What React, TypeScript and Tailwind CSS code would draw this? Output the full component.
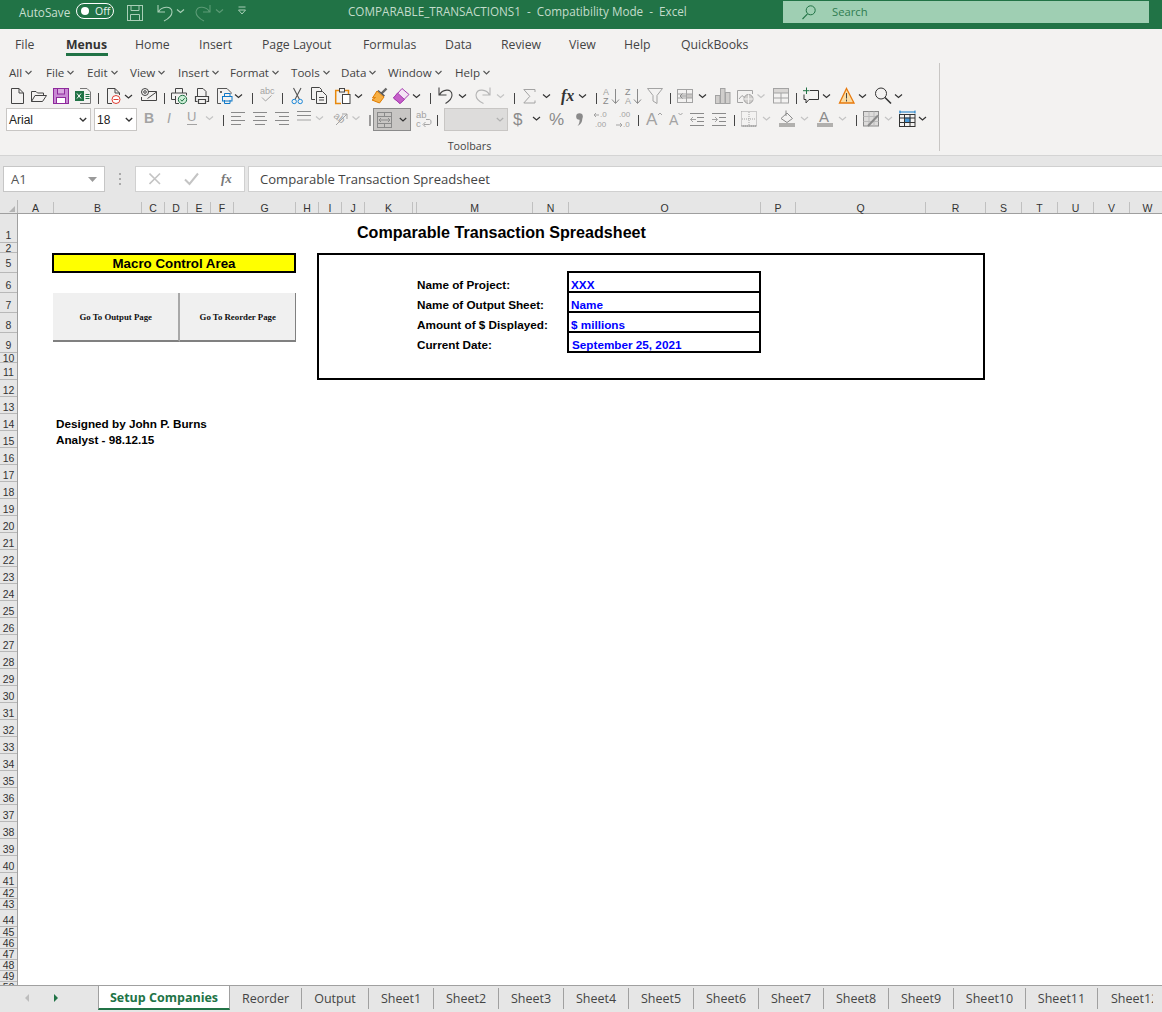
import React from "react";

const D = "#444";
const G = "#a3a3a3";
const M = "#8a8a8a";

function Ico({ x, to, y, h = 24, children }: { x: number; to: number; y: number; h?: number; children?: React.ReactNode }) {
  const w = to - x;
  return (
    <svg width={w} height={h} viewBox={`${x} ${y} ${w} ${h}`} fill="none" className="shrink-0 overflow-visible">
      {children}
    </svg>
  );
}
const P = ({ d, c = D, w = 1, f = "none" }: { d: string; c?: string; w?: number; f?: string }) => (
  <path d={d} stroke={c} strokeWidth={w} fill={f} />
);
const Chev = ({ x, y, c = "#333" }: { x: number; y: number; c?: string }) => (
  <path d={`M${x - 3.5} ${y - 1.5}L${x} ${y + 1.5}L${x + 3.5} ${y - 1.5}`} stroke={c} strokeWidth={1.2} fill="none" />
);
const Sep = ({ x, y }: { x: number; y: number }) => <path d={`M${x} ${y}V${y + 11}`} stroke="#444" strokeWidth={1} />;
const T = ({ x, y, s, c = G, b, i, fam = "Liberation Sans", children }: { x: number; y: number; s: number; c?: string; b?: boolean; i?: boolean; fam?: string; children: React.ReactNode }) => (
  <text x={x} y={y} fontSize={s} fill={c} fontFamily={fam} fontWeight={b ? 700 : 400} fontStyle={i ? "italic" : "normal"}>
    {children}
  </text>
);

function ToolbarRow1() {
  const y = 85;
  return (
    <div className="flex h-[23px] pl-[11px] shrink-0">
      <Ico x={11} to={31} y={y}><P d="M11.5 88.5H19L23.5 93V103.5H11.5Z M19 88.5V93H23.5" /></Ico>
      <Ico x={31} to={53} y={y}><P d="M31.5 101.5V91.5H36L37.5 93H43.5V95.5 M31.5 101.5H42.5L46.5 95.5H35L31.5 101.5" /></Ico>
      <Ico x={53} to={75} y={y}>
        <rect x={53.5} y={88.5} width={15} height={15} fill="#c98ad4" stroke="#8e2a9c" />
        <rect x={57.5} y={88.5} width={7} height={5.5} fill="#d9a8e0" stroke="#8e2a9c" />
        <rect x={56.5} y={97.5} width={9} height={6} fill="#fff" stroke="#8e2a9c" />
      </Ico>
      <Ico x={75} to={98} y={y}>
        <P d="M80 88.5H87L90.5 92V103.5H80" c="#777" />
        <rect x={75} y={91} width={9} height={10} fill="#217346" />
        <P d="M77 93.5l4 5M81 93.5l-4 5" c="#fff" />
        <P d="M85.5 94.5h4M85.5 96.5h4M85.5 98.5h4" c="#217346" />
      </Ico>
      <Ico x={98} to={107} y={y}><Sep x={98.5} y={93} /></Ico>
      <Ico x={107} to={141} y={y}>
        <P d="M107.5 103.5V88.5H115L119.5 93V95 M115 88.5V93H119.5 M107.5 103.5H112" />
        <circle cx={116} cy={99.5} r={4} fill="#fff" stroke="#e03c31" />
        <P d="M113.5 99.5h5" c="#e03c31" />
        <Chev x={128.5} y={96.5} />
      </Ico>
      <Ico x={141} to={164} y={y}>
        <P d="M148 91.5H156.5V100.5H141.5V97" />
        <P d="M147.5 98.5L156.5 92" />
        <circle cx={145} cy={92} r={3.5} stroke={D} />
        <circle cx={145} cy={92} r={1.3} stroke={D} />
      </Ico>
      <Ico x={164} to={171} y={y}><Sep x={164.5} y={93} /></Ico>
      <Ico x={171} to={195} y={y}>
        <P d="M175.5 93V88.5H182.5V93 M175 99.5H171.5V93H186.5V95.5 M175.5 96V103.5H179" />
        <circle cx={182.5} cy={99.5} r={4.2} fill="#cdeed6" stroke="#217346" />
        <P d="M180.5 99.5l1.5 1.7l2.7-3" c="#217346" />
      </Ico>
      <Ico x={195} to={217} y={y}>
        <P d="M197.5 96V88.5H203L206 91.5V96" />
        <P d="M197.5 101.5H195.5V96.5H208.5V101.5H206.5" w={1.2} />
        <P d="M198.5 99.5H205.5V103.5H198.5Z" w={1.2} />
      </Ico>
      <Ico x={217} to={252} y={y}>
        <P d="M217.5 103.5V88.5H227L231 92.5V94" c="#555" />
        <P d="M217.5 103.5H221" c="#555" />
        <rect x={220} y={91} width={2} height={2} fill="#666" />
        <rect x={222.5} y={96.5} width={9.5} height={4.5} stroke="#0e78c8" />
        <P d="M224.5 96V93.5H230V96 M224.5 100V103.5H230V100" c="#0e78c8" />
        <Chev x={238.5} y={96} />
      </Ico>
      <Ico x={252} to={260} y={y}><Sep x={252.5} y={93} /></Ico>
      <Ico x={260} to={282} y={y}>
        <T x={260} y={94} s={9}>abc</T>
        <P d="M262 97.5l3.5 3.5l6-5.5" c={G} />
      </Ico>
      <Ico x={282} to={291} y={y}><Sep x={282.5} y={93} /></Ico>
      <Ico x={291} to={311} y={y}>
        <P d="M293.5 88L299.5 99.5M301 88L295 99.5" c="#555" w={1.1} />
        <circle cx={294.2} cy={101.5} r={2.2} stroke="#1b87d8" />
        <circle cx={300.2} cy={101.5} r={2.2} stroke="#1b87d8" />
      </Ico>
      <Ico x={311} to={335} y={y}>
        <P d="M315 99.5H311.5V87.5H319.5L321.5 89.5V91" />
        <P d="M316.5 91.5H322.5L326.5 95.5V103.5H316.5Z" f="#f3f2f1" />
        <P d="M319 97.5h5M319 100h5" />
      </Ico>
      <Ico x={335} to={371} y={y}>
        <P d="M339 90.5H335.7V103.5H341" c="#e8890c" w={1.5} />
        <P d="M345 90.5H348.5V94" c="#e8890c" w={1.5} />
        <rect x={339.5} y={88.5} width={5} height={3.5} stroke={D} />
        <rect x={342.5} y={94.5} width={7.5} height={9} fill="#fff" stroke={D} />
        <Chev x={358.5} y={96} />
      </Ico>
      <Ico x={371} to={393} y={y}>
        <P d="M381.5 93.5L386.5 88.5" c="#666" w={2.4} />
        <path d="M377 91L384 97L379.5 103L372 100L375.5 97.5L372.5 98Z" fill="#f7b044" stroke="#e07b00" />
        <P d="M378 90.5L384.5 96" c="#555" w={1.4} />
      </Ico>
      <Ico x={393} to={430} y={y}>
        <path d="M402 88.5L409 94.5L400 103.5L393.5 98Z" fill="#f4e3f5" stroke="#a63bb0" />
        <path d="M397.5 93L404.5 99.5L400 103.5L393.5 98Z" fill="#c65fc9" stroke="#a63bb0" />
        <Chev x={416.5} y={96} />
      </Ico>
      <Ico x={430} to={438} y={y}><Sep x={430.5} y={93} /></Ico>
      <Ico x={438} to={475} y={y}>
        <P d="M439 87.5V95H446.5 M439.5 95C442 89.5 452 87.5 452 95C452 99 448 102 445.5 103.5" w={1.1} />
        <Chev x={462.5} y={96} />
      </Ico>
      <Ico x={475} to={514} y={y}>
        <P d="M490 87.5V95H482.5 M489.5 95C487 89.5 477 87.5 476 95C476 99 480 102 483.5 103.5" c="#b5b5b5" w={1.1} />
        <Chev x={500.5} y={96} c="#c4c4c4" />
      </Ico>
      <Ico x={514} to={523} y={y}><Sep x={514.5} y={93} /></Ico>
      <Ico x={523} to={561} y={y}>
        <P d="M535 92V89.5H523.8L529.8 96.3L523.8 103H535V100.5" c={G} />
        <Chev x={546.5} y={96} />
      </Ico>
      <Ico x={561} to={596} y={y}>
        <T x={561} y={101} s={16} c="#333" b i fam="Liberation Serif">fx</T>
        <Chev x={582.5} y={96} />
      </Ico>
      <Ico x={596} to={603} y={y}><Sep x={596.5} y={93} /></Ico>
      <Ico x={603} to={625} y={y}>
        <T x={603} y={94.5} s={9}>A</T>
        <T x={603} y={103.5} s={9} c="#888">Z</T>
        <P d="M615.5 89V103M612 99.5l3.5 4l3.5-4" c={M} />
      </Ico>
      <Ico x={625} to={647} y={y}>
        <T x={625} y={94.5} s={9} c="#888">Z</T>
        <T x={625} y={103.5} s={9}>A</T>
        <P d="M637.5 89V103M634 99.5l3.5 4l3.5-4" c={M} />
      </Ico>
      <Ico x={647} to={670} y={y}><P d="M647.5 88.5H662.5L657 95.5V103.5L653 101V95.5Z" c={G} /></Ico>
      <Ico x={670} to={677} y={y}><Sep x={670.5} y={93} /></Ico>
      <Ico x={677} to={715} y={y}>
        <rect x={677.5} y={89.5} width={15} height={13} stroke={G} />
        <rect x={687} y={94} width={5} height={4} fill="#c8c6c4" />
        <P d="M686.5 89.5V102.5M677.5 94H692.5M677.5 98H692.5" c={G} />
        <P d="M686 96H680M682.5 93.5L680 96L682.5 98.5" c={M} />
        <Chev x={702.5} y={96} />
      </Ico>
      <Ico x={715} to={737} y={y}>
        <rect x={715.5} y={95.5} width={4.5} height={8} fill="#d0cecc" stroke={G} />
        <rect x={720.5} y={88.5} width={4.5} height={15} fill="#d0cecc" stroke={G} />
        <rect x={725.5} y={92.5} width={4.5} height={11} fill="#d0cecc" stroke={G} />
      </Ico>
      <Ico x={737} to={773} y={y}>
        <P d="M737.5 90.5H752.5V94 M737.5 90.5V102.5H743" c={G} />
        <P d="M739 99L742 95.5L745 98" c={G} />
        <circle cx={748.5} cy={99} r={4.5} fill="#d0cecc" stroke={G} />
        <P d="M744 99h9M748.5 94.5v9" c="#f3f2f1" />
        <Chev x={761} y={96} c="#c4c4c4" />
      </Ico>
      <Ico x={773} to={796} y={y}>
        <rect x={773.5} y={88.5} width={15} height={14.5} fill="#f3f2f1" stroke={G} />
        <rect x={774} y={89} width={14} height={4} fill="#d8d6d4" />
        <P d="M773.5 93H788.5M773.5 98H788.5M781 93V103" c={G} />
      </Ico>
      <Ico x={796} to={803} y={y}><Sep x={796.5} y={93} /></Ico>
      <Ico x={803} to={839} y={y}>
        <P d="M810 90.5H818.5V99.5H809L806 103V99.5H804V94.5" c="#333" />
        <P d="M806.5 87.5V94M803 90.7H809.5" c="#217346" />
        <Chev x={826.5} y={96} />
      </Ico>
      <Ico x={839} to={875} y={y}>
        <path d="M846.5 88.5L854 103H839.5Z" fill="#fbdca3" stroke="#e8790c" strokeWidth={1.3} />
        <P d="M846.5 93V98.5M846.5 99.5V101.5" c="#444" />
        <Chev x={862.5} y={96} />
      </Ico>
      <Ico x={875} to={912} y={y}>
        <circle cx={881} cy={93.5} r={5.5} stroke="#333" />
        <P d="M885 97.5L891 103.5" c="#333" w={1.6} />
        <Chev x={898.5} y={96} />
      </Ico>
    </div>
  );
}

function Lines({ ls, y0, gap }: { ls: [number, number][]; y0: number; gap: number }) {
  return (
    <>
      {ls.map((l, i) => (
        <path key={i} d={`M${l[0]} ${y0 + i * gap}H${l[1]}`} stroke={M} strokeWidth={1} />
      ))}
    </>
  );
}

function SelectBox({ label, cls }: { label: string; cls: string }) {
  return (
    <div className={`${cls} h-[23px] bg-white border border-[#c8c6c4] flex items-center justify-between pl-[2px] pr-[3px] text-[12px] text-[#222] font-['Liberation_Sans',sans-serif]`}>
      <span>{label}</span>
      <svg width={8} height={5} viewBox="0 0 8 5" fill="none"><path d="M0.8 1L4 4L7.2 1" stroke="#333" strokeWidth={1.3} /></svg>
    </div>
  );
}

function ToolbarRow2() {
  const y = 108;
  return (
    <div className="flex h-[24px] pl-[6px] shrink-0">
      <SelectBox label="Arial" cls="w-[85px]" />
      <div className="w-[3px]" />
      <SelectBox label="18" cls="w-[43px]" />
      <Ico x={137} to={223} y={y}>
        <T x={144} y={123} s={14} b>B</T>
        <T x={167} y={123} s={14} i>I</T>
        <T x={187} y={121} s={13}>U</T>
        <P d="M187 124.5H197" c={G} />
        <Chev x={209.5} y={118} c="#c4c4c4" />
      </Ico>
      <Ico x={223} to={231} y={y}><Sep x={223.5} y={115} /></Ico>
      <Ico x={231} to={253} y={y}><Lines ls={[[231, 245], [231, 241], [231, 245], [231, 241]]} y0={112.5} gap={4} /></Ico>
      <Ico x={253} to={275} y={y}><Lines ls={[[253, 267], [255, 265], [253, 267], [255, 265]]} y0={112.5} gap={4} /></Ico>
      <Ico x={275} to={297} y={y}><Lines ls={[[275, 289], [279, 289], [275, 289], [279, 289]]} y0={112.5} gap={4} /></Ico>
      <Ico x={297} to={332} y={y}>
        <Lines ls={[[297, 311], [297, 311]]} y0={111.5} gap={4} />
        <path d="M297 120H311" stroke={G} />
        <Chev x={319.5} y={118} c="#c4c4c4" />
      </Ico>
      <Ico x={332} to={370} y={y}>
        <text x={333} y={117} fontSize={10} fill={G} fontFamily="Liberation Sans" transform="rotate(38 333 117)">ab</text>
        <P d="M336 125L347 114M342 114H347V119" c={G} />
        <Chev x={356} y={118} c="#c4c4c4" />
      </Ico>
      <Ico x={370} to={373} y={y}><Sep x={370} y={115} /></Ico>
      <div className="w-[38px] h-[23px] bg-[#c8c6c4] border border-[#8a8a8a] flex items-center pl-[3px] gap-[7px]">
        <svg width={15} height={16} viewBox="0 0 15 16" fill="none">
          <rect x={0.5} y={0.5} width={14} height={15} stroke="#8a8a8a" />
          <path d="M0.5 4.5H14.5M0.5 11.5H14.5M7.5 0.5V4.5M7.5 11.5V15.5M2 8H13M4 6L2 8L4 10M11 6L13 8L11 10" stroke="#8a8a8a" />
        </svg>
        <svg width={8} height={5} viewBox="0 0 8 5" fill="none"><path d="M0.8 1L4 4L7.2 1" stroke="#333" strokeWidth={1.2} /></svg>
      </div>
      <Ico x={411} to={437} y={y}>
        <T x={416} y={118} s={9.5}>ab</T>
        <T x={416} y={127} s={9.5}>c</T>
        <P d="M424 124.5H429.5C431.5 124.5 431.5 119.5 429.5 119.5H426M425.5 122L423 124.5L425.5 127" c={G} />
      </Ico>
      <Ico x={437} to={444} y={y}><Sep x={437.5} y={115} /></Ico>
      <div className="w-[64px] h-[23px] bg-[#dddcdb] border border-[#c8c6c4] flex items-center justify-end pr-[3px]">
        <svg width={8} height={5} viewBox="0 0 8 5" fill="none"><path d="M0.8 1L4 4L7.2 1" stroke="#b0b0b0" strokeWidth={1.2} /></svg>
      </div>
      <Ico x={508} to={549} y={y}>
        <T x={513} y={125} s={17} c={M}>$</T>
        <Chev x={536.5} y={118.5} />
      </Ico>
      <Ico x={549} to={576} y={y}><T x={549} y={125} s={17} c={M}>%</T></Ico>
      <Ico x={576} to={593} y={y}>
        <circle cx={579.5} cy={116.5} r={3.3} fill={M} />
        <path d="M582 117C583 121 581 124.5 577.5 126C579.5 123.5 579.8 121 579.5 119Z" fill={M} />
      </Ico>
      <Ico x={593} to={615} y={y}>
        <T x={600} y={117} s={8}>.0</T>
        <T x={595} y={127} s={8}>.00</T>
        <P d="M599 115H594M596 113L594 115L596 117" c={G} />
      </Ico>
      <Ico x={615} to={638} y={y}>
        <T x={619} y={117} s={8}>.00</T>
        <T x={623} y={127} s={8}>.0</T>
        <P d="M616 125H622M620 123L622 125L620 127" c={G} />
      </Ico>
      <Ico x={638} to={646} y={y}><Sep x={638.5} y={115} /></Ico>
      <Ico x={646} to={669} y={y}>
        <T x={646} y={125} s={17}>A</T>
        <P d="M658 115l2-2l2 2" c={G} />
      </Ico>
      <Ico x={669} to={690} y={y}>
        <T x={669} y={125} s={14}>A</T>
        <P d="M678.5 113l2 2l2-2" c={G} />
      </Ico>
      <Ico x={690} to={712} y={y}>
        <Lines ls={[[690, 704], [697, 704], [697, 704], [690, 704]]} y0={113.5} gap={4} />
        <P d="M696 119.5H690.5M693 117L690.5 119.5L693 122" c={G} />
      </Ico>
      <Ico x={712} to={734} y={y}>
        <Lines ls={[[712, 726], [719, 726], [719, 726], [712, 726]]} y0={113.5} gap={4} />
        <P d="M712 119.5H717.5M715 117L717.5 119.5L715 122" c={G} />
      </Ico>
      <Ico x={734} to={741} y={y}><Sep x={734.5} y={115} /></Ico>
      <Ico x={741} to={779} y={y}>
        <rect x={741.5} y={111.5} width={15} height={14.5} stroke={G} strokeDasharray="1 1" />
        <path d="M749 112V126M742 119H756" stroke={G} strokeDasharray="1 1" />
        <P d="M741.5 126H756.5" c={M} />
        <Chev x={766.5} y={118.5} c="#c4c4c4" />
      </Ico>
      <Ico x={779} to={817} y={y}>
        <P d="M781 118.5L787 113L792.5 118.5L787 122.5Z" c={M} />
        <P d="M786 110.5V116" c={M} />
        <rect x={779} y={123} width={16} height={4} fill="#b1b0ae" />
        <Chev x={804.5} y={118.5} c="#c4c4c4" />
      </Ico>
      <Ico x={817} to={856} y={y}>
        <T x={819} y={122} s={15} c={M}>A</T>
        <rect x={817} y={123} width={16} height={4} fill="#b1b0ae" />
        <Chev x={842.5} y={118.5} c="#c4c4c4" />
      </Ico>
      <Ico x={856} to={863} y={y}><Sep x={856.5} y={115} /></Ico>
      <Ico x={863} to={899} y={y}>
        <rect x={863.5} y={111.5} width={15} height={14.5} fill="#dddcdb" stroke={M} />
        <P d="M863.5 116.5H878.5M863.5 121.5H878.5M869 111.5V126M874 111.5V126" c="#bbb" />
        <P d="M868 126L878 115.5" c={M} w={2} />
        <Chev x={888.5} y={118.5} c="#c4c4c4" />
      </Ico>
      <Ico x={899} to={930} y={y}>
        <P d="M899.5 112H915M900 110.5V113.5M915 110.5V113.5" c="#0e78c8" />
        <rect x={904} y={117.5} width={6.5} height={5} fill="#4a9ad9" />
        <rect x={899.5} y={114.5} width={15.5} height={12} stroke="#333" />
        <P d="M899.5 118H915M899.5 122.5H915M904.5 114.5V126.5M910 114.5V126.5" c="#333" />
        <Chev x={922.5} y={118.5} />
      </Ico>
    </div>
  );
}

const tabs: [string, string][] = [
  ["File", "w-[51px]"],
  ["Menus", "w-[69px]"],
  ["Home", "w-[64px]"],
  ["Insert", "w-[63px]"],
  ["Page Layout", "w-[101px]"],
  ["Formulas", "w-[82px]"],
  ["Data", "w-[56px]"],
  ["Review", "w-[68px]"],
  ["View", "w-[55px]"],
  ["Help", "w-[57px]"],
  ["QuickBooks", "w-[90px]"],
];
const menus: [string, string][] = [
  ["All", "w-[37px]"],
  ["File", "w-[41px]"],
  ["Edit", "w-[43px]"],
  ["View", "w-[48px]"],
  ["Insert", "w-[52px]"],
  ["Format", "w-[61px]"],
  ["Tools", "w-[50px]"],
  ["Data", "w-[47px]"],
  ["Window", "w-[67px]"],
  ["Help", "w-[50px]"],
];

const columns: [string, string][] = [
  ["A", "w-[36px]"], ["B", "w-[88px]"], ["C", "w-[23px]"], ["D", "w-[23px]"], ["E", "w-[23px]"], ["F", "w-[23px]"],
  ["G", "w-[62px]"], ["H", "w-[23px]"], ["I", "w-[23px]"], ["J", "w-[23px]"], ["K", "w-[48px]"], ["", "w-[4px]"],
  ["M", "w-[116px]"], ["N", "w-[36px]"], ["O", "w-[192px]"], ["P", "w-[35px]"], ["Q", "w-[130px]"], ["R", "w-[60px]"],
  ["S", "w-[36px]"], ["T", "w-[36px]"], ["U", "w-[36px]"], ["V", "w-[36px]"], ["W", "w-[36px]"],
];

const rows: [string, string][] = [
  ["1", "h-[29px] items-end pb-[1px]"],
  ["2", "h-[10px] items-center"],
  ["5", "h-[20px] items-end pb-[3px]"],
  ["6", "h-[20px] items-end pb-[1px]"],
  ["7", "h-[20px] items-end pb-[1px]"],
  ["8", "h-[20px] items-end pb-[1px]"],
  ["9", "h-[20px] items-end pb-[1px]"],
  ["10", "h-[10px] items-center"],
  ["11", "h-[17px] items-end pb-[1px]"],
];
for (let n = 12; n <= 40; n++) rows.push([String(n), "h-[17px] items-end"]);
rows.push(
  ["41", "h-[15px] items-end"],
  ["42", "h-[11px] items-center"],
  ["43", "h-[11px] items-center"],
  ["44", "h-[17px] items-end"],
);
for (let n = 45; n <= 49; n++) rows.push([String(n), "h-[11px] items-center"]);
rows.push(["50", "h-[11px] items-center"]);

const sheetTabs: [string, string][] = [
  ["Reorder", "w-[72px]"], ["Output", "w-[67px]"], ["Sheet1", "w-[65px]"], ["Sheet2", "w-[65px]"], ["Sheet3", "w-[65px]"],
  ["Sheet4", "w-[65px]"], ["Sheet5", "w-[65px]"], ["Sheet6", "w-[65px]"], ["Sheet7", "w-[65px]"], ["Sheet8", "w-[65px]"],
  ["Sheet9", "w-[65px]"], ["Sheet10", "w-[72px]"], ["Sheet11", "w-[72px]"],
];

const params: [string, string, string, string][] = [
  ["Name of Project:", "XXX", "row-[4]", "border-t-2 -mt-[2px] pl-[2px]"],
  ["Name of Output Sheet:", "Name", "row-[5]", "pl-[2px]"],
  ["Amount of $ Displayed:", "$ millions", "row-[6]", "pl-[2px]"],
  ["Current Date:", "September 25, 2021", "row-[7]", "pl-[3px]"],
];

export default function App() {
  return (
    <div className="w-[1162px] h-[1012px] overflow-hidden flex flex-col bg-white font-['Open_Sans',sans-serif]">
      {/* title bar */}
      <div className="h-[29px] bg-[#217346] flex items-start shrink-0">
        <span className="ml-[19px] mt-[3px] text-[11.75px] leading-[18px] w-[57px] text-[#c7dfcf]">AutoSave</span>
        <div className="mt-[3px] w-[38px] h-[16px] rounded-full border border-white flex items-center pl-[4px] gap-[6px]">
          <div className="w-[8px] h-[8px] rounded-full bg-white" />
          <span className="text-[10.5px] leading-none text-[#e8f2ec]">Off</span>
        </div>
        <Ico x={114} to={345} y={0} h={29}>
          <rect x={127.5} y={5.5} width={15} height={15} stroke="#a9cfb7" />
          <P d="M131 5.5V10.5H139V5.5M130.5 20.5V14.5H139.5V20.5" c="#a9cfb7" />
          <P d="M158 5V12H165M158.5 12C161 6.5 172 5 172 12C172 16 168 19 164 21" c="#a9cfb7" w={1.1} />
          <Chev x={180.5} y={11} c="#a9cfb7" />
          <P d="M210 5V12H203M209.5 12C207 6.5 197 5 196 12C196 16 200 19 204 21" c="#5c9b76" w={1.1} />
          <Chev x={219.5} y={11} c="#5c9b76" />
          <P d="M238.5 7H245.5M238.5 10H245.5L242 14Z" c="#a9cfb7" />
        </Ico>
        <span className="ml-[3px] mt-[2px] w-[435px] text-[11.7px] leading-[18px] text-[#c3dccb] whitespace-pre">COMPARABLE_TRANSACTIONS1  -  Compatibility Mode  -  Excel</span>
        <div className="w-[366px] h-[22px] mt-[1px] bg-[#9fcfb3] flex items-center pl-[19px] gap-[16px]">
          <svg width={14} height={15} viewBox="0 0 14 15" fill="none">
            <circle cx={8.7} cy={5.3} r={4.5} stroke="#217346" />
            <path d="M5.5 8.8L0.5 14" stroke="#217346" strokeWidth={1.1} />
          </svg>
          <span className="text-[11.25px] text-[#2f7d51]">Search</span>
        </div>
      </div>

      {/* ribbon */}
      <div className="h-[127px] bg-[#f3f2f1] border-b border-[#d4d4d4] shrink-0 flex flex-col">
        <div className="flex h-[31px] pl-[15px] text-[12.25px] text-[#444] pt-[7px] shrink-0">
          {tabs.map(([t, w]) => (
            <div key={t} className={`${w} shrink-0 whitespace-nowrap`}>
              {t === "Menus" ? (
                <span className="inline-block font-bold h-[20px] w-[42px] text-[#333] border-b-[3px] border-[#217346] leading-[17px]">Menus</span>
              ) : (
                <span className="leading-[17px] inline-block">{t}</span>
              )}
            </div>
          ))}
        </div>
        <div className="w-[940px] h-[88px] mt-[3px] border-r border-[#c8c6c4] flex flex-col shrink-0">
          <div className="flex h-[22px] pl-[9px] pb-[2px] text-[11.6px] text-[#444] items-center shrink-0">
            {menus.map(([t, w]) => (
              <div key={t} className={`${w} shrink-0 flex items-center gap-[3px]`}>
                <span>{t}</span>
                <svg width={7} height={5} viewBox="0 0 7 5" fill="none"><path d="M0.5 1L3.5 4L6.5 1" stroke="#555" strokeWidth={1.1} /></svg>
              </div>
            ))}
          </div>
          <ToolbarRow1 />
          <ToolbarRow2 />
          <div className="text-center text-[10.75px] leading-[10px] mt-[9px] text-[#444] shrink-0">Toolbars</div>
        </div>
      </div>

      {/* formula bar */}
      <div className="h-[44px] bg-[#e6e6e6] pt-[10px] flex shrink-0 items-start">
        <div className="ml-[3px] w-[102px] h-[26px] bg-white border border-[#c6c6c6] flex items-center justify-between pl-[7px] pr-[7px] pt-[1px] text-[13px] text-[#555]">
          <span>A1</span>
          <svg width={9} height={5} viewBox="0 0 9 5"><path d="M0 0H9L4.5 5Z" fill="#9a9a9a" /></svg>
        </div>
        <div className="w-[30px] h-[26px] flex flex-col items-center justify-center gap-[3px]">
          <div className="w-[2px] h-[2px] bg-[#aaa]" />
          <div className="w-[2px] h-[2px] bg-[#aaa]" />
          <div className="w-[2px] h-[2px] bg-[#aaa]" />
        </div>
        <div className="w-[110px] h-[26px] bg-white border border-[#d0d0d0] flex items-center pl-[13px]">
          <svg width={84} height={16} viewBox="0 0 84 16" fill="none">
            <path d="M0.5 2.5L11 13M11 2.5L0.5 13" stroke="#c4c4c4" strokeWidth={1.6} />
            <path d="M36 8.5L40.5 13L49 2.5" stroke="#c4c4c4" strokeWidth={2} />
            <text x={72} y={12} fontSize={13} fontFamily="Liberation Serif" fontStyle="italic" fontWeight={700} fill="#777">fx</text>
          </svg>
        </div>
        <div className="ml-[3px] flex-1 h-[26px] bg-white border border-[#d0d0d0] border-r-0 flex items-center pl-[11px] pt-[1px] text-[13.1px] text-[#444]">
          Comparable Transaction Spreadsheet
        </div>
      </div>

      {/* column headers */}
      <div className="h-[14px] bg-[#e6e6e6] border-b border-[#9f9f9f] flex shrink-0 font-['Liberation_Sans',sans-serif] text-[10.5px] text-[#333]">
        <div className="w-[18px] shrink-0 flex items-end justify-end pr-[2px] pb-[1px] border-r border-[#b8b8b8]">
          <svg width={6} height={6} viewBox="0 0 6 6"><path d="M6 0V6H0Z" fill="#b4b4b4" /></svg>
        </div>
        {columns.map(([c, w], i) => (
          <div key={i} className={`${w} shrink-0 flex items-center justify-center leading-none border-r border-[#c0c0c0] mt-[2px] pt-[1px]`}>{c}</div>
        ))}
      </div>

      {/* sheet */}
      <div className="flex-1 flex overflow-hidden">
        <div className="w-[18px] shrink-0 bg-[#e6e6e6] border-r border-[#9f9f9f] overflow-hidden font-['Liberation_Sans',sans-serif] text-[10.5px] text-[#333]">
          {rows.map(([n, h]) => (
            <div key={n} className={`${h} flex justify-center leading-[12px] border-b border-[#b8b8b8]`}>{n}</div>
          ))}
        </div>
        <div className="grid grid-cols-[36px_88px_23px_23px_23px_23px_62px_23px_23px_23px_48px_4px_116px_36px_192px_35px_130px_60px] grid-rows-[29px_10px_20px_20px_20px_20px_20px_10px_17px_17px_17px_17px_17px] content-start font-['Liberation_Sans',sans-serif] font-bold text-[11.72px] text-black">
          <div className="col-[10/19] row-[1] pl-[15px] pt-[8px] text-[16.1px] leading-[20px] whitespace-nowrap">Comparable Transaction Spreadsheet</div>
          <div className="col-[2/8] row-[3] bg-[#ffff00] border-2 border-black -ml-[2px] pt-[1px] flex items-center justify-center text-[13.3px] leading-none">Macro Control Area</div>
          <div className="col-[2/8] row-[5/8] h-[49px] -ml-[1px] flex font-['Liberation_Serif',serif] text-[8.8px] text-[#111]">
            <button className="w-[128px] h-full pt-[2px] bg-[#f0f0f0] border-b-2 border-b-[#808080] border-r-2 border-r-[#a8a8a8]">Go To Output Page</button>
            <button className="w-[116px] h-full pt-[2px] bg-[#f0f0f0] border-b-2 border-b-[#808080] border-r border-r-[#808080]">Go To Reorder Page</button>
          </div>
          <div className="col-[9/19] row-[3/10] -ml-[2px] mr-[1px] border-2 border-black" />
          {params.map(([label, value, row, cls]) => (
            <React.Fragment key={label}>
              <div className={`col-[13/15] ${row} flex items-end pb-[1px] leading-[14px] whitespace-nowrap`}>{label}</div>
              <div className={`col-[15] ${row} ${cls} -ml-[2px] border-x-2 border-b-2 border-black text-[#0000ff] flex items-end leading-[12px] whitespace-nowrap`}>{value}</div>
            </React.Fragment>
          ))}
          <div className="col-[2/8] row-[12] pl-[2px] flex items-end leading-[14px] whitespace-nowrap">Designed by John P. Burns</div>
          <div className="col-[2/8] row-[13] pl-[2px] pb-[1px] flex items-end leading-[14px] whitespace-nowrap">Analyst - 98.12.15</div>
        </div>
      </div>

      {/* sheet tabs */}
      <div className="h-[27px] shrink-0 bg-[#e6e6e6] border-t border-[#a0a0a0] flex items-start text-[12.5px] text-[#444]">
        <div className="w-[98px] h-full flex items-center shrink-0 pl-[25px] gap-[25px] pb-[2px]">
          <svg width={4} height={8} viewBox="0 0 4 8"><path d="M4 0V8L0 4Z" fill="#bdbdbd" /></svg>
          <svg width={4} height={8} viewBox="0 0 4 8"><path d="M0 0V8L4 4Z" fill="#217346" /></svg>
        </div>
        <div className="w-[132px] h-[25px] -mt-[1px] pt-[2px] bg-white border-x border-t border-[#a0a0a0] border-b-2 border-b-[#217346] flex items-center justify-center font-bold text-[#217346] whitespace-nowrap shrink-0">Setup Companies</div>
        {sheetTabs.map(([t, w]) => (
          <div key={t} className={`${w} h-[21px] mt-[2px] pt-[1px] shrink-0 flex items-center justify-center border-r border-[#a0a0a0]`}>{t}</div>
        ))}
        <div className="w-[55px] h-[21px] mt-[2px] pt-[1px] pl-[13px] overflow-hidden flex items-center whitespace-nowrap">Sheet12</div>
      </div>
    </div>
  );
}
